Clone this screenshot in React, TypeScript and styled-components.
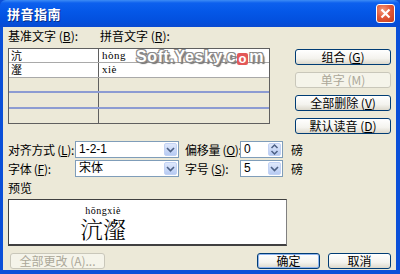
import styled, { createGlobalStyle } from "styled-components";

const GlobalStyle = createGlobalStyle`
  html, body {
    margin: 0;
    padding: 0;
    background: #ece9d8;
  }
  * {
    box-sizing: border-box;
  }
`;

const font = `"Noto Sans CJK SC", "Liberation Sans", sans-serif`;

const Chevron = () => (
  <svg width="9" height="6" viewBox="0 0 9 6">
    <polyline points="1,1 4.5,4.5 8,1" fill="none" stroke="#4d6185" strokeWidth="1.6" />
  </svg>
);

const UpDown = () => (
  <svg width="9" height="13" viewBox="0 0 9 13">
    <polyline points="1.5,5 4.5,2 7.5,5" fill="none" stroke="#4d6185" strokeWidth="1.5" />
    <polyline points="1.5,8 4.5,11 7.5,8" fill="none" stroke="#4d6185" strokeWidth="1.5" />
  </svg>
);

const App = () => {
  const rows = [
    { base: "沆", ruby: "hòng", filled: true, h: 14 },
    { base: "瀣", ruby: "xiè", filled: true, h: 15 },
    { base: "", ruby: "", filled: false, h: 15 },
    { base: "", ruby: "", filled: false, h: 16 },
    { base: "", ruby: "", filled: false, h: 14 },
  ];

  return (
    <Window>
      <GlobalStyle />
      <TitleBar>
        <Title>拼音指南</Title>
        <CloseButton>
          <svg width="11" height="11" viewBox="0 0 11 11">
            <path d="M1.5 1.5 L9.5 9.5 M9.5 1.5 L1.5 9.5" stroke="#fff" strokeWidth="2.2" />
          </svg>
        </CloseButton>
      </TitleBar>
      <Body>
        <TopArea>
          <LeftColumn>
            <HeaderRow>
              <HeaderLabel $width={92}>基准文字 (<u>B</u>):</HeaderLabel>
              <HeaderLabel>拼音文字 (<u>R</u>):</HeaderLabel>
            </HeaderRow>
            <Table>
              {rows.map((r, i) => (
                <Row key={i} $filled={r.filled} $h={r.h} $last={i === rows.length - 1}>
                  <BaseCell>{r.base}</BaseCell>
                  <RubyCell>{r.ruby}</RubyCell>
                </Row>
              ))}
              <Watermark>
                Soft.Yesky.c<RedO>o</RedO>m
              </Watermark>
            </Table>
          </LeftColumn>
          <ButtonColumn>
            <Button $width={96}>组合 (<u>G</u>)</Button>
            <Button $width={96} disabled>单字 (M)</Button>
            <Button $width={96}>全部删除 (<u>V</u>)</Button>
            <Button $width={96}>默认读音 (<u>D</u>)</Button>
          </ButtonColumn>
        </TopArea>

        <FormRow $top={7}>
          <FieldLabel $width={67}>对齐方式 (<u>L</u>):</FieldLabel>
          <Combo $width={104}>
            <ComboText>1-2-1</ComboText>
            <ComboArrow><Chevron /></ComboArrow>
          </Combo>
          <FieldLabel $width={55} $gap={6}>偏移量 (<u>O</u>):</FieldLabel>
          <Combo $width={43}>
            <ComboText>0</ComboText>
            <ComboArrow><UpDown /></ComboArrow>
          </Combo>
          <Unit>磅</Unit>
        </FormRow>
        <FormRow $top={2}>
          <FieldLabel $width={67}>字体 (<u>F</u>):</FieldLabel>
          <Combo $width={104}>
            <ComboText>宋体</ComboText>
            <ComboArrow><Chevron /></ComboArrow>
          </Combo>
          <FieldLabel $width={55} $gap={6}>字号 (<u>S</u>):</FieldLabel>
          <Combo $width={43}>
            <ComboText>5</ComboText>
            <ComboArrow><Chevron /></ComboArrow>
          </Combo>
          <Unit>磅</Unit>
        </FormRow>

        <PreviewLabel>预览</PreviewLabel>
        <PreviewBox>
          <RubyBlock>
            <RubyLine>hōngxiè</RubyLine>
            <BigText>沆瀣</BigText>
          </RubyBlock>
        </PreviewBox>

        <Footer>
          <Button $width={95} disabled>全部更改 (A)...</Button>
          <FooterRight>
            <Button $width={63} $focused>确定</Button>
            <Button $width={63}>取消</Button>
          </FooterRight>
        </Footer>
      </Body>
    </Window>
  );
};

export default App;

const Window = styled.div`
  width: 400px;
  height: 274px;
  display: flex;
  flex-direction: column;
  background: #0a4fd8;
  padding: 0 4px 4px 3px;
  font-family: ${font};
  font-size: 12px;
  color: #000;
  overflow: hidden;
`;

const TitleBar = styled.div`
  height: 27px;
  margin: 0 -4px 0 -3px;
  padding: 0 5px 0 7px;
  display: flex;
  align-items: center;
  justify-content: space-between;
  background: linear-gradient(
    #3d8cf5 0,
    #0d60ee 3px,
    #0558e8 40%,
    #034fdd 80%,
    #0a4ad0 100%
  );
  border-radius: 6px 6px 0 0;
`;

const Title = styled.div`
  color: #fff;
  font-weight: 700;
  font-size: 13px;
  letter-spacing: 0.5px;
  text-shadow: 1px 1px 0 #0a2f8a;
`;

const CloseButton = styled.div`
  width: 19px;
  height: 19px;
  display: flex;
  align-items: center;
  justify-content: center;
  border: 1px solid #fff;
  border-radius: 3px;
  background: radial-gradient(circle at 35% 30%, #f29a7c 0, #e2593a 45%, #c43d1c 100%);
`;

const Body = styled.div`
  flex: 1;
  background: #ece9d8;
  padding: 0 5px;
  display: flex;
  flex-direction: column;
`;

const TopArea = styled.div`
  display: flex;
  gap: 25px;
`;

const LeftColumn = styled.div`
  width: 262px;
  display: flex;
  flex-direction: column;
`;

const HeaderRow = styled.div`
  display: flex;
  height: 21px;
  padding-top: 2px;
  line-height: 14px;
`;

const HeaderLabel = styled.div<{ $width?: number }>`
  width: ${(p) => (p.$width ? `${p.$width}px` : "auto")};
`;

const Table = styled.div`
  position: relative;
  border: 1px solid #5f5f5f;
  display: flex;
  flex-direction: column;
  background: #ece9d8;
`;

const Row = styled.div<{ $filled: boolean; $h: number; $last: boolean }>`
  display: flex;
  height: ${(p) => p.$h}px;
  background: ${(p) => (p.$filled ? "#fff" : "#ece9d8")};
  border-bottom: ${(p) =>
    p.$last ? "none" : p.$filled ? "1px solid #a9a9a9" : "2px solid #8d9cd2"};
`;

const BaseCell = styled.div`
  width: 90px;
  padding-left: 2px;
  border-right: 1px solid #5f5f5f;
  line-height: 13px;
  font-size: 11px;
`;

const RubyCell = styled.div`
  flex: 1;
  padding-left: 3px;
  font-family: "Liberation Serif", "Noto Sans CJK SC", serif;
  font-size: 11px;
  line-height: 13px;
  letter-spacing: 0.5px;
`;

const Watermark = styled.div`
  position: absolute;
  left: 127px;
  top: 0;
  white-space: nowrap;
  font-family: "Liberation Sans", sans-serif;
  font-weight: 700;
  font-size: 16px;
  line-height: 16px;
  letter-spacing: 0.6px;
  color: #fff;
  text-shadow: -1px -1px 0 #8a8a8a, 1px -1px 0 #8a8a8a, -1px 1px 0 #8a8a8a,
    1px 1px 0 #8a8a8a, 2px 2px 1px #6d6d6d;
  pointer-events: none;
`;

const RedO = styled.span`
  display: inline-block;
  vertical-align: -1px;
  width: 11px;
  height: 12px;
  background: #e35858;
  color: #fff;
  border-radius: 2px;
  line-height: 12px;
  font-size: 13px;
  text-align: center;
  text-shadow: none;
  margin: 0 1px;
`;

const ButtonColumn = styled.div`
  display: flex;
  flex-direction: column;
  gap: 7px;
  padding-top: 22px;
`;

const Button = styled.button<{ $width: number; $focused?: boolean }>`
  width: ${(p) => p.$width}px;
  height: 16px;
  padding: 0;
  font-family: ${font};
  font-size: 12px;
  line-height: 14px;
  color: #000;
  border: 1px solid #003c74;
  border-radius: 3px;
  background: linear-gradient(#ffffff 0, #f4f3ee 60%, #dcd8cc 100%);
  box-shadow: ${(p) => (p.$focused ? "inset 0 0 0 1px #8fb4ee" : "none")};
  cursor: default;
  white-space: nowrap;

  &:disabled {
    color: #aca899;
    border-color: #c9c7ba;
    background: #f5f4ea;
  }

  u {
    text-decoration: underline;
  }
`;

const FormRow = styled.div<{ $top: number }>`
  display: flex;
  align-items: center;
  height: 17px;
  margin-top: ${(p) => p.$top}px;
`;

const FieldLabel = styled.div<{ $width: number; $gap?: number }>`
  width: ${(p) => p.$width}px;
  margin-left: ${(p) => p.$gap ?? 0}px;
  white-space: nowrap;
  letter-spacing: -0.3px;
`;

const Combo = styled.div<{ $width: number }>`
  width: ${(p) => p.$width}px;
  height: 17px;
  display: flex;
  border: 1px solid #7f9db9;
  background: #fff;
`;

const ComboText = styled.div`
  flex: 1;
  padding-left: 3px;
  font-family: "Liberation Sans", "Noto Sans CJK SC", sans-serif;
  font-size: 12px;
  line-height: 15px;
`;

const ComboArrow = styled.div`
  width: 13px;
  margin: 1px;
  display: flex;
  align-items: center;
  justify-content: center;
  border-radius: 2px;
  background: linear-gradient(#dfe8fb, #b7cbf3);
  border: 1px solid #c2d2f4;
`;

const Unit = styled.div`
  margin-left: 8px;
`;

const PreviewLabel = styled.div`
  margin-top: 5px;
  height: 12px;
  line-height: 12px;
`;

const PreviewBox = styled.div`
  width: 279px;
  height: 47px;
  margin-top: 5px;
  background: #fff;
  border: 1px solid #404040;
  border-right-color: #808080;
  border-bottom-width: 2px;
  padding-left: 71px;
`;

const RubyBlock = styled.div`
  display: inline-flex;
  flex-direction: column;
  align-items: center;
  gap: 1px;
  padding-top: 3px;
`;

const RubyLine = styled.div`
  font-family: "Liberation Serif", serif;
  font-size: 10px;
  line-height: 11px;
  letter-spacing: 0.5px;
`;

const BigText = styled.div`
  font-family: "Noto Serif CJK SC", "Noto Sans CJK SC", serif;
  font-size: 23px;
  line-height: 24px;
  font-weight: 300;
`;

const Footer = styled.div`
  display: flex;
  justify-content: space-between;
  align-items: center;
  margin-top: 7px;
  padding-left: 2px;
`;

const FooterRight = styled.div`
  display: flex;
  gap: 8px;
`;
